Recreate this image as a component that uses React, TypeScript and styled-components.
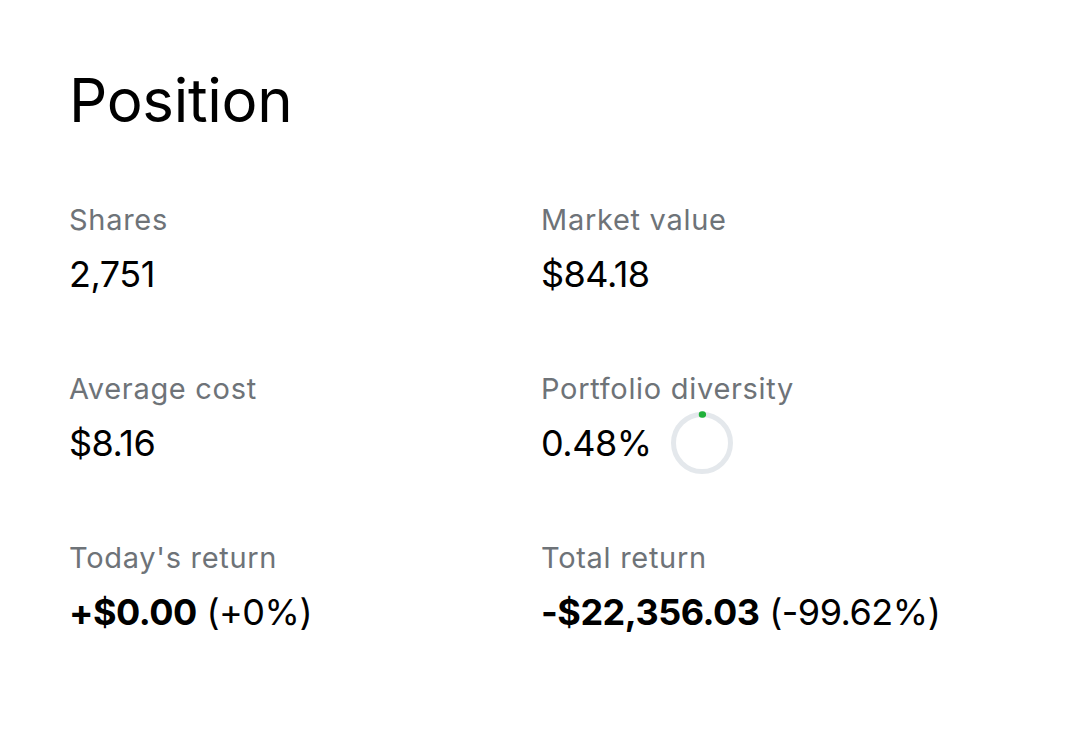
import React from "react";
import styled, { createGlobalStyle } from "styled-components";

const GlobalStyle = createGlobalStyle`
  html, body {
    margin: 0;
    padding: 0;
    background: #ffffff;
  }
  body {
    font-family: Inter, "Liberation Sans", sans-serif;
    color: #000000;
  }
`;

type StatTypes = {
  label: string;
  value: string;
  change?: string;
  ring?: number;
};

const stats: StatTypes[] = [
  { label: "Shares", value: "2,751" },
  { label: "Market value", value: "$84.18" },
  { label: "Average cost", value: "$8.16" },
  { label: "Portfolio diversity", value: "0.48%", ring: 0.0048 },
  { label: "Today's return", value: "+$0.00", change: "(+0%)" },
  { label: "Total return", value: "-$22,356.03", change: "(-99.62%)" },
];

// small donut showing the share of the portfolio
const DiversityRing = ({ ratio }: { ratio: number }) => {
  const r = 28.5;
  const c = 2 * Math.PI * r;
  const arc = Math.max(ratio * c, 0.5);
  return (
    <RingSvg width="64" height="64" viewBox="0 0 64 64">
      <circle cx="32" cy="32" r={r} fill="none" stroke="#e4e8ec" strokeWidth="5" />
      <circle
        cx="32"
        cy="32"
        r={r}
        fill="none"
        stroke="#20b13a"
        strokeWidth="6.5"
        strokeLinecap="round"
        strokeDasharray={`${arc} ${c}`}
        transform="rotate(-90 32 32)"
      />
    </RingSvg>
  );
};

const App = () => {
  return (
    <>
      <GlobalStyle />
      <Container>
        <Title>Position</Title>
        <Grid>
          {stats.map((s) => (
            <Stat key={s.label}>
              <Label>{s.label}</Label>
              <ValueRow>
                {s.change ? (
                  <Value>
                    <Strong>{s.value}</Strong> {s.change}
                  </Value>
                ) : (
                  <Value>{s.value}</Value>
                )}
                {s.ring !== undefined && <DiversityRing ratio={s.ring} />}
              </ValueRow>
            </Stat>
          ))}
        </Grid>
      </Container>
    </>
  );
};

export default App;

const Container = styled.div`
  padding: 64px 69px 0;
`;
const Title = styled.h1`
  margin: 0;
  font-size: 60px;
  font-weight: 400;
  line-height: 72px;
  letter-spacing: -0.3px;
`;
const Grid = styled.div`
  display: grid;
  grid-template-columns: 472px 1fr;
  row-gap: 75px;
  margin-top: 66px;
`;
const Stat = styled.div`
  display: flex;
  flex-direction: column;
`;
const Label = styled.div`
  font-size: 29px;
  line-height: 36px;
  letter-spacing: 0.7px;
  color: #6e7378;
`;
const ValueRow = styled.div`
  display: flex;
  align-items: center;
  gap: 18px;
  height: 44px;
  margin-top: 14px;
`;
const Value = styled.div`
  font-size: 36px;
  line-height: 44px;
  letter-spacing: -0.5px;
  white-space: nowrap;
`;
const Strong = styled.b`
  font-weight: 700;
`;
const RingSvg = styled.svg`
  display: block;
  flex-shrink: 0;
`;
